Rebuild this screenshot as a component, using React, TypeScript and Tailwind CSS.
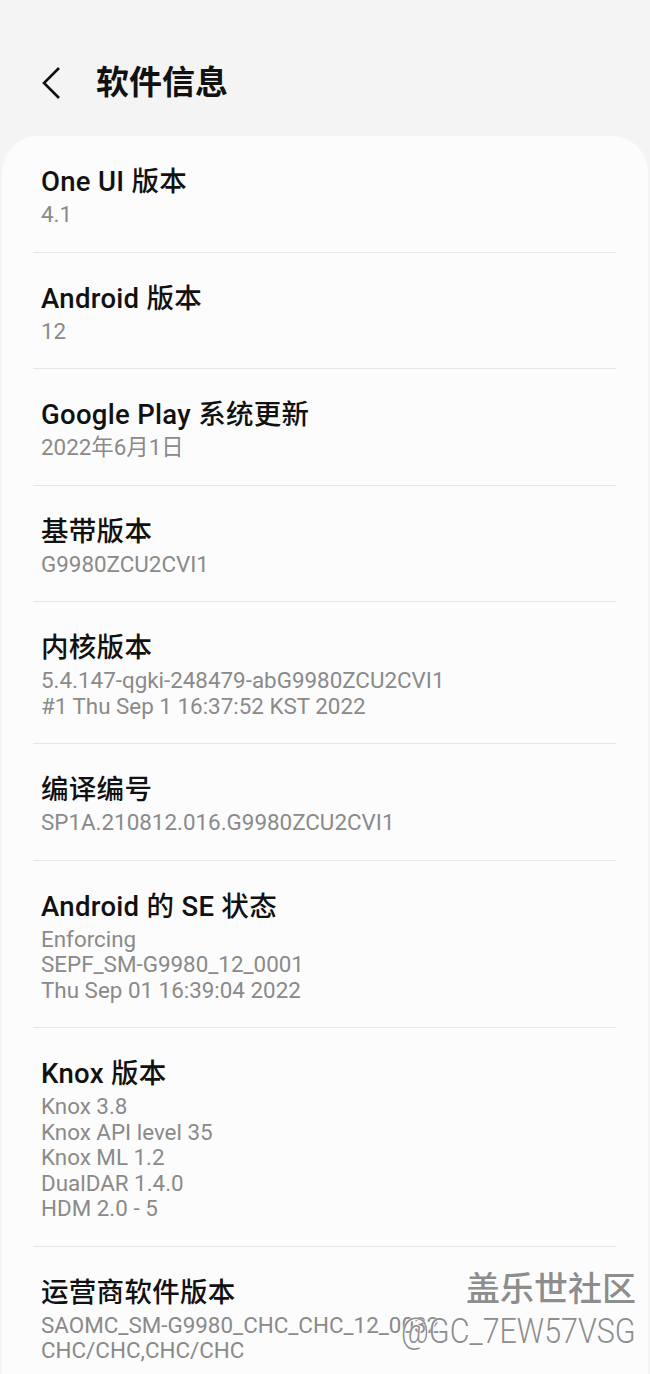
const items: { title: string; lines: string[] }[] = [
  { title: 'One UI 版本', lines: ['4.1'] },
  { title: 'Android 版本', lines: ['12'] },
  { title: 'Google Play 系统更新', lines: ['2022年6月1日'] },
  { title: '基带版本', lines: ['G9980ZCU2CVI1'] },
  {
    title: '内核版本',
    lines: ['5.4.147-qgki-248479-abG9980ZCU2CVI1', '#1 Thu Sep 1 16:37:52 KST 2022'],
  },
  { title: '编译编号', lines: ['SP1A.210812.016.G9980ZCU2CVI1'] },
  {
    title: 'Android 的 SE 状态',
    lines: ['Enforcing', 'SEPF_SM-G9980_12_0001', 'Thu Sep 01 16:39:04 2022'],
  },
  {
    title: 'Knox 版本',
    lines: ['Knox 3.8', 'Knox API level 35', 'Knox ML 1.2', 'DualDAR 1.4.0', 'HDM 2.0 - 5'],
  },
  {
    title: '运营商软件版本',
    lines: ['SAOMC_SM-G9980_CHC_CHC_12_0032', 'CHC/CHC,CHC/CHC'],
  },
];

function Row({ title, lines, last }: { title: string; lines: string[]; last: boolean }) {
  return (
    <div>
      <div className="px-[39px] pt-[25px] pb-[24px]">
        <div className="text-[27.5px] leading-[41px] font-medium tracking-[0.3px] text-[#111111]">{title}</div>
        {lines.map((l) => (
          <div key={l} className="text-[22.4px] leading-[25.5px] text-[#8a8a8a]">
            {l}
          </div>
        ))}
      </div>
      {!last && <div className="ml-[31px] mr-[32px] h-px bg-[#e6e6e6]" />}
    </div>
  );
}

export default function App() {
  return (
    <div
      className="relative h-[1374px] w-[650px] overflow-hidden bg-[#f4f4f4]"
      style={{ fontFamily: 'Roboto, "Noto Sans CJK SC", sans-serif' }}
    >
      <header className="flex h-[136px] items-center pt-[30px] pl-[42px]">
        <svg width="20" height="34" viewBox="0 0 20 34" className="text-[#111111]">
          <path d="M17 2 L2 17 L17 32" fill="none" stroke="currentColor" strokeWidth="2.6" strokeLinejoin="miter" />
        </svg>
        <h1 className="ml-[34px] text-[33px] font-bold text-[#111111]">软件信息</h1>
      </header>

      <div className="mx-[2px] min-h-[1300px] rounded-[36px] bg-[#fcfcfc]">
        {items.map((it, i) => (
          <Row key={it.title} title={it.title} lines={it.lines} last={i === items.length - 1} />
        ))}
      </div>

      {/* watermark */}
      <div className="pointer-events-none absolute right-[14px] top-[1267px] flex flex-col items-end text-[#8d8d8d] [text-shadow:0_0_2px_#ffffff,1px_1px_1px_#ffffff]">
        <div className="text-[34px] leading-[44px] font-medium">盖乐世社区</div>
        <div className="origin-right scale-x-[0.87] text-[35px] leading-[42px] font-light">@GC_7EW57VSG</div>
      </div>
    </div>
  );
}
